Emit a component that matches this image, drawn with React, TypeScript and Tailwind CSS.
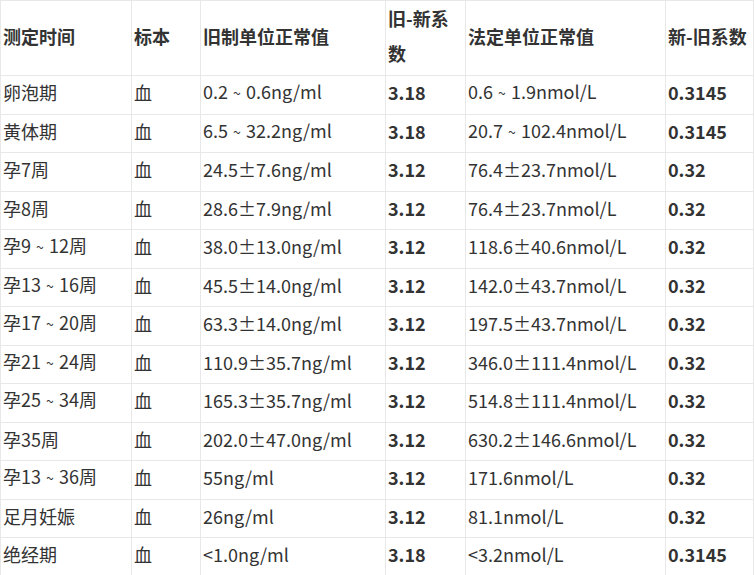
import React from 'react';

type Row = { time: string; sample: string; oldVal: string; oldNew: string; newVal: string; newOld: string };

const rows: Row[] = [
  { time: '卵泡期', sample: '血', oldVal: '0.2～0.6ng/ml', oldNew: '3.18', newVal: '0.6～1.9nmol/L', newOld: '0.3145' },
  { time: '黄体期', sample: '血', oldVal: '6.5～32.2ng/ml', oldNew: '3.18', newVal: '20.7～102.4nmol/L', newOld: '0.3145' },
  { time: '孕7周', sample: '血', oldVal: '24.5±7.6ng/ml', oldNew: '3.12', newVal: '76.4±23.7nmol/L', newOld: '0.32' },
  { time: '孕8周', sample: '血', oldVal: '28.6±7.9ng/ml', oldNew: '3.12', newVal: '76.4±23.7nmol/L', newOld: '0.32' },
  { time: '孕9～12周', sample: '血', oldVal: '38.0±13.0ng/ml', oldNew: '3.12', newVal: '118.6±40.6nmol/L', newOld: '0.32' },
  { time: '孕13～16周', sample: '血', oldVal: '45.5±14.0ng/ml', oldNew: '3.12', newVal: '142.0±43.7nmol/L', newOld: '0.32' },
  { time: '孕17～20周', sample: '血', oldVal: '63.3±14.0ng/ml', oldNew: '3.12', newVal: '197.5±43.7nmol/L', newOld: '0.32' },
  { time: '孕21～24周', sample: '血', oldVal: '110.9±35.7ng/ml', oldNew: '3.12', newVal: '346.0±111.4nmol/L', newOld: '0.32' },
  { time: '孕25～34周', sample: '血', oldVal: '165.3±35.7ng/ml', oldNew: '3.12', newVal: '514.8±111.4nmol/L', newOld: '0.32' },
  { time: '孕35周', sample: '血', oldVal: '202.0±47.0ng/ml', oldNew: '3.12', newVal: '630.2±146.6nmol/L', newOld: '0.32' },
  { time: '孕13～36周', sample: '血', oldVal: '55ng/ml', oldNew: '3.12', newVal: '171.6nmol/L', newOld: '0.32' },
  { time: '足月妊娠', sample: '血', oldVal: '26ng/ml', oldNew: '3.12', newVal: '81.1nmol/L', newOld: '0.32' },
  { time: '绝经期', sample: '血', oldVal: '<1.0ng/ml', oldNew: '3.18', newVal: '<3.2nmol/L', newOld: '0.3145' },
];

// the full-width tilde renders small in the original font, so draw it as a small "~" in an 18px slot
const Txt = ({ s }: { s: string }) => {
  const parts = s.split('～');
  return (
    <>
      {parts.map((p, i) => (
        <React.Fragment key={i}>
          {i > 0 && <span className="inline-block w-[18px] text-center text-[14px]">~</span>}
          {p}
        </React.Fragment>
      ))}
    </>
  );
};

const cell = 'border border-[#e8e8e8] pl-[2px] pr-0 align-middle text-left whitespace-nowrap';
const body = cell + ' leading-[30px] pt-0 pb-[5px]';
const head = cell + ' leading-[35px] pt-0 pb-[4px]';

export default function App() {
  return (
    <div className="w-[754px] h-[575px] bg-white text-[#333] text-[18px] font-['Noto_Sans_CJK_SC','Noto_Sans',sans-serif]">
      <table className="border-collapse table-fixed w-[753px]">
        <colgroup>
          <col className="w-[131px]" />
          <col className="w-[69px]" />
          <col className="w-[185px]" />
          <col className="w-[80px]" />
          <col className="w-[200px]" />
          <col className="w-[88px]" />
        </colgroup>
        <thead>
          <tr className="h-[74px] font-bold">
            <th className={head}>测定时间</th>
            <th className={head}>标本</th>
            <th className={head}>旧制单位正常值</th>
            <th className={head}>
              旧-新系
              <br />
              数
            </th>
            <th className={head}>法定单位正常值</th>
            <th className={head}>新-旧系数</th>
          </tr>
        </thead>
        <tbody>
          {rows.map((r, i) => (
            <tr key={i} className="h-[38.5px]">
              <td className={body}><Txt s={r.time} /></td>
              <td className={body}>{r.sample}</td>
              <td className={body}><Txt s={r.oldVal} /></td>
              <td className={body + ' font-bold'}>{r.oldNew}</td>
              <td className={body}><Txt s={r.newVal} /></td>
              <td className={body + ' font-bold'}>{r.newOld}</td>
            </tr>
          ))}
        </tbody>
      </table>
    </div>
  );
}
